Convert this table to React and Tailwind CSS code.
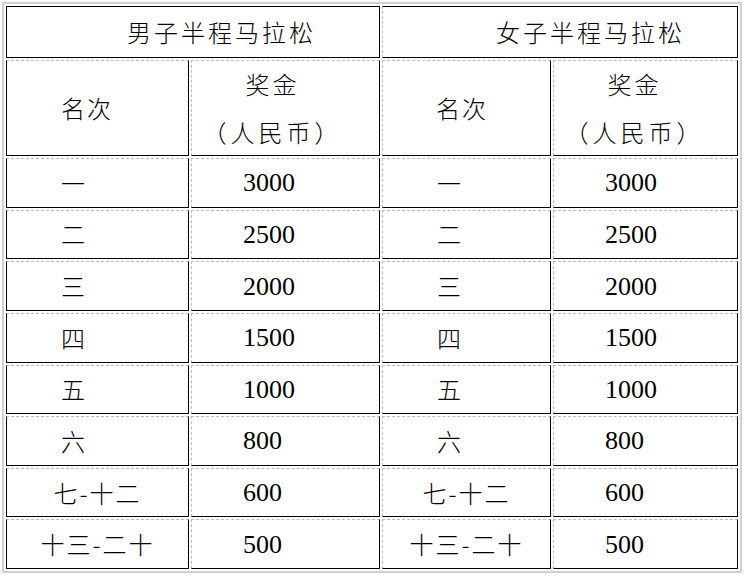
const cjk = "font-['Noto_Sans_CJK_SC',sans-serif]";
const num = "font-['Liberation_Serif',serif]";

// cell edges: right/bottom solid black, top/left dashed gray unless on the table edge
const cell = (top, left) =>
  [
    "flex items-center border border-black",
    top ? "" : "[border-top-style:dashed] border-t-[#bdbdbd]",
    left ? "" : "[border-left-style:dashed] border-l-[#bdbdbd]",
  ].join(" ");

const prizes = [
  ["一", "3000"],
  ["二", "2500"],
  ["三", "2000"],
  ["四", "1500"],
  ["五", "1000"],
  ["六", "800"],
  ["七-十二", "600"],
  ["十三-二十", "500"],
];

function RankCell({ label, first }) {
  const single = label.length === 1;
  return (
    <div
      className={`${cell(false, first)} ${
        single ? "justify-start pl-[54px]" : "justify-center"
      }`}
    >
      <span className={`${cjk} text-[24px] font-light tracking-[2px] text-black`}>
        {label}
      </span>
    </div>
  );
}

function PrizeCell({ value }) {
  return (
    <div className={`${cell(false, false)} justify-start pl-[51px]`}>
      <span className={`${num} text-[26px] text-black`}>{value}</span>
    </div>
  );
}

function HeadPrize({ pad }) {
  return (
    <div className={`${cell(false, false)} flex-col justify-center ${pad}`}>
      <span className={`${cjk} text-[24px] font-light leading-[48px] tracking-[3px]`}>
        奖金
      </span>
      <span className={`${cjk} text-[24px] font-light leading-[48px] tracking-[4px]`}>
        （人民币）
      </span>
    </div>
  );
}

export default function App() {
  return (
    <div className="w-[745px] h-[576px] bg-white pt-[2px] pl-[2px]">
      <div className="w-[740px] h-[571px] border-2 border-[#d0d0d0] p-[2px]">
        <div className="grid h-[563px] grid-cols-[183px_189px_169px_185px] grid-rows-[52px_96px_repeat(8,1fr)] gap-[2px]">
          <div className={`${cell(true, true)} col-span-2 justify-start pl-[120px]`}>
            <span className={`${cjk} text-[24px] font-light tracking-[3px]`}>
              男子半程马拉松
            </span>
          </div>
          <div className={`${cell(true, false)} col-span-2 justify-start pl-[113px]`}>
            <span className={`${cjk} text-[24px] font-light tracking-[3px]`}>
              女子半程马拉松
            </span>
          </div>

          <div className={`${cell(false, true)} justify-start pl-[54px]`}>
            <span className={`${cjk} text-[24px] font-light tracking-[2px]`}>名次</span>
          </div>
          <HeadPrize pad="pr-[26px]" />
          <div className={`${cell(false, false)} justify-start pl-[53px]`}>
            <span className={`${cjk} text-[24px] font-light tracking-[2px]`}>名次</span>
          </div>
          <HeadPrize pad="pr-[22px]" />

          {prizes.map(([rank, amount]) => (
            <div key={rank} className="contents">
              <RankCell label={rank} first />
              <PrizeCell value={amount} />
              <RankCell label={rank} first={false} />
              <PrizeCell value={amount} />
            </div>
          ))}
        </div>
      </div>
    </div>
  );
}
